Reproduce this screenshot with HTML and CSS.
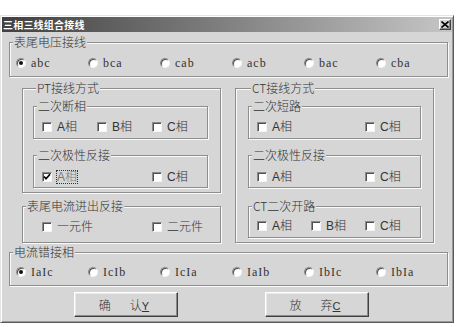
FILE: index.html
```html
<!DOCTYPE html>
<html lang="zh">
<head>
<meta charset="utf-8">
<title>三相三线组合接线</title>
<link rel="stylesheet" href="styles.css">
</head>
<body>
<div class="window">
  <div class="titlebar">
    <span class="title">三相三线组合接线</span>
    <span class="close"><svg width="8" height="7" viewBox="0 0 8 7"><path d="M0.5 0.5 L7.5 6.5 M7.5 0.5 L0.5 6.5" stroke="#000" stroke-width="1.6"/></svg></span>
  </div>
  <div class="content">
    <fieldset class="group wide volt">
      <legend>表尾电压接线</legend>
      <div class="radios">
        <label class="radio on"><i></i>abc</label>
        <label class="radio"><i></i>bca</label>
        <label class="radio"><i></i>cab</label>
        <label class="radio"><i></i>acb</label>
        <label class="radio"><i></i>bac</label>
        <label class="radio"><i></i>cba</label>
      </div>
    </fieldset>

    <div class="mid">
      <div class="col">
        <fieldset class="group pt">
          <legend>PT接线方式</legend>
          <fieldset class="group sub s1">
            <legend>二次断相</legend>
            <div class="checks c55">
              <span class="chk"><i></i>A相</span>
              <span class="chk"><i></i>B相</span>
              <span class="chk"><i></i>C相</span>
            </div>
          </fieldset>
          <fieldset class="group sub s2">
            <legend>二次极性反接</legend>
            <div class="checks c55">
              <span class="chk checked"><i><svg width="8" height="8" viewBox="0 0 8 8"><path d="M1 3.5 L3 5.8 L7 1.2" fill="none" stroke="#000" stroke-width="1.7"/></svg></i><em class="focus">A相</em></span>
              <span class="chk col3"><i></i>C相</span>
            </div>
          </fieldset>
        </fieldset>
        <fieldset class="group rev">
          <legend>表尾电流进出反接</legend>
          <div class="checks c110">
            <span class="chk"><i></i>一元件</span>
            <span class="chk"><i></i>二元件</span>
          </div>
        </fieldset>
      </div>

      <fieldset class="group ct">
        <legend>CT接线方式</legend>
        <fieldset class="group sub s1">
          <legend>二次短路</legend>
          <div class="checks c54">
            <span class="chk"><i></i>A相</span>
            <span class="chk col3"><i></i>C相</span>
          </div>
        </fieldset>
        <fieldset class="group sub s2">
          <legend>二次极性反接</legend>
          <div class="checks c54">
            <span class="chk"><i></i>A相</span>
            <span class="chk col3"><i></i>C相</span>
          </div>
        </fieldset>
        <fieldset class="group sub s3">
          <legend>CT二次开路</legend>
          <div class="checks c54">
            <span class="chk"><i></i>A相</span>
            <span class="chk"><i></i>B相</span>
            <span class="chk"><i></i>C相</span>
          </div>
        </fieldset>
      </fieldset>
    </div>

    <fieldset class="group wide cur">
      <legend>电流错接相</legend>
      <div class="radios">
        <label class="radio on"><i></i>IaIc</label>
        <label class="radio"><i></i>IcIb</label>
        <label class="radio"><i></i>IcIa</label>
        <label class="radio"><i></i>IaIb</label>
        <label class="radio"><i></i>IbIc</label>
        <label class="radio"><i></i>IbIa</label>
      </div>
    </fieldset>

    <div class="buttons">
      <button class="btn"><span>确</span><span>认<u>Y</u></span></button>
      <button class="btn"><span>放</span><span>弃<u>C</u></span></button>
    </div>
  </div>
</div>
</body>
</html>
```
FILE: styles.css
```css
html, body {
  margin: 0;
  padding: 0;
  background: #ffffff;
}
body {
  font-family: "Noto Sans CJK SC", "Liberation Sans", sans-serif;
  font-size: 12px;
  color: #333333;
}
.window {
  box-sizing: border-box;
  margin-top: 15px;
  width: 454px;
  height: 308px;
  background: #d6d6d6;
  border: 1px solid;
  border-color: #e4e4e4 #5a5a5a #5a5a5a #e4e4e4;
  box-shadow: inset 1px 1px 0 #ffffff, inset -1px -1px 0 #9a9a9a;
  padding: 1px;
  display: flex;
  flex-direction: column;
}
.titlebar {
  height: 15px;
  display: flex;
  align-items: center;
  background: linear-gradient(to right, #404040 0%, #7a7a7a 45%, #c6c6c6 100%);
}
.title {
  padding-left: 1px;
  color: #ffffff;
  font-weight: bold;
  font-size: 10px;
  line-height: 15px;
  letter-spacing: 0.2px;
}
.close {
  margin-left: auto;
  margin-right: 1px;
  width: 10px;
  height: 9px;
  display: flex;
  align-items: center;
  justify-content: center;
  background: #d6d6d6;
  border: 1px solid;
  border-color: #ffffff #404040 #404040 #ffffff;
  box-shadow: inset -1px -1px 0 #8a8a8a;
}
.content {
  display: flex;
  flex-direction: column;
}
.group {
  margin: 0;
  padding: 0;
  min-width: 0;
  border: 1px solid #8e8e8e;
  box-shadow: inset 1px 1px 0 #fafafa, 1px 1px 0 #fafafa;
}
.group > legend {
  margin-left: 3px;
  padding: 0 1px;
  font-size: 12px;
  font-weight: 300;
  line-height: 14px;
  background: #d6d6d6;
  color: #333333;
}
.wide {
  margin-left: 7px;
  margin-right: 4px;
}
.volt {
  margin-top: 3px;
}
.radios {
  display: grid;
  grid-template-columns: repeat(6, 72px);
  padding: 7px 0 6px 6px;
  height: 14px;
}
.cur {
  margin-top: 2px;
}
.cur .radios {
  padding-top: 6px;
}
.radio {
  display: flex;
  align-items: center;
  font-family: "Liberation Serif", "DejaVu Serif", serif;
  font-size: 12px;
  letter-spacing: 1px;
  line-height: 14px;
  color: #333333;
}
.radio i {
  box-sizing: border-box;
  width: 10px;
  height: 10px;
  margin-right: 5px;
  border-radius: 50%;
  background: #ffffff;
  border: 1px solid;
  border-color: #8a8a8a #f4f4f4 #f4f4f4 #8a8a8a;
  box-shadow: inset 1px 1px 0 #505050;
  display: flex;
  align-items: center;
  justify-content: center;
}
.radio.on i::after {
  content: "";
  width: 4px;
  height: 4px;
  border-radius: 50%;
  background: #111111;
}
.mid {
  display: flex;
  align-items: stretch;
  gap: 14px;
  margin-top: 4px;
  margin-left: 20px;
}
.col {
  width: 199px;
  display: flex;
  flex-direction: column;
}
.pt {
  padding: 4px 12px 4px 10px;
}
.ct {
  width: 199px;
  box-sizing: border-box;
  padding: 4px 12px 0 12px;
}
.sub.s2 {
  margin-top: 9px;
}
.sub.s3 {
  margin-top: 11px;
}
.checks {
  display: grid;
  height: 12px;
  padding: 8px 0 5px 8px;
}
.s2 .checks {
  padding-top: 9px;
  padding-bottom: 4px;
}
.s3 .checks {
  padding-top: 7px;
  padding-bottom: 5px;
}
.c55 {
  grid-template-columns: repeat(3, 55px);
}
.c54 {
  grid-template-columns: repeat(3, 54px);
}
.c110 {
  grid-template-columns: repeat(2, 110px);
  padding-left: 19px;
  padding-bottom: 9px;
}
.rev {
  margin-top: 6px;
}
.chk {
  display: flex;
  align-items: center;
  font-size: 12px;
  font-weight: 300;
  line-height: 12px;
  white-space: nowrap;
  font-family: "Liberation Sans", "Noto Sans CJK SC", sans-serif;
  color: #333333;
}
.chk.col3 {
  grid-column: 3;
}
.chk i {
  box-sizing: border-box;
  width: 10px;
  height: 10px;
  margin-right: 5px;
  background: #ffffff;
  border: 1px solid;
  border-color: #8a8a8a #f4f4f4 #f4f4f4 #8a8a8a;
  box-shadow: inset 1px 1px 0 #505050;
  display: flex;
  align-items: center;
  justify-content: center;
}
.focus {
  font-style: normal;
  color: #7a7a7a;
  outline: 1px dotted #333333;
  outline-offset: 0;
}
.buttons {
  display: flex;
  gap: 87px;
  margin-top: 6px;
  margin-left: 72px;
}
.btn {
  box-sizing: border-box;
  width: 104px;
  height: 25px;
  margin: 0;
  padding: 0 4px 0 0;
  display: flex;
  align-items: center;
  justify-content: center;
  gap: 19px;
  background: #d6d6d6;
  border: 1px solid;
  border-color: #ffffff #404040 #404040 #ffffff;
  box-shadow: inset -1px -1px 0 #8a8a8a, inset 1px 1px 0 #e8e8e8;
  font-family: "Noto Sans CJK SC", "Liberation Sans", sans-serif;
  font-size: 12px;
  font-weight: 300;
  color: #333333;
}
.btn u {
  font-family: "Liberation Sans", sans-serif;
  font-size: 11px;
}
```
